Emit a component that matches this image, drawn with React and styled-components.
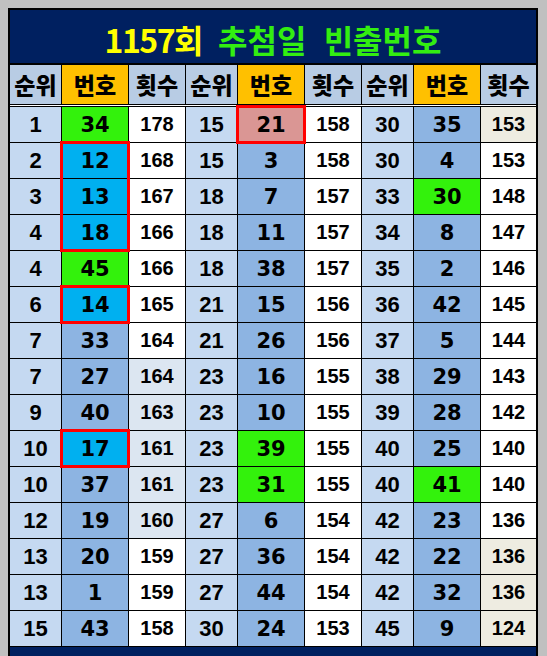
import React from 'react';
import styled, { createGlobalStyle, css } from 'styled-components';

const GlobalStyle = createGlobalStyle`
    body {
        margin: 0;
        padding: 8px;
        background: #c0c0c0;
        font-family: "Liberation Sans", "Noto Sans CJK KR", sans-serif;
    }
`;

const Sheet = styled.div`
    width: 530px;
    box-sizing: border-box;
    border: 2px solid #000;
    border-bottom: none;
    background: #000;
`;

const Title = styled.h1`
    margin: 0 0 2px;
    height: 53px;
    box-sizing: border-box;
    padding-top: 4px;
    background: #002060;
    display: flex;
    align-items: center;
    justify-content: center;
    gap: 16px;
    font: 700 32px "Noto Sans CJK KR", sans-serif;
    line-height: 1;
`;

const Round = styled.span`
    color: #ffff00;
    letter-spacing: -1.5px;
`;

const Subject = styled.span`
    color: #33ee11;
    word-spacing: 10px;
`;

const Grid = styled.div`
    display: grid;
    grid-template-columns: 51px 66px 56px 51px 66px 56px 51px 66px 55px;
    gap: 1px;
`;

const HeadCell = styled.div`
    height: 39px;
    display: flex;
    align-items: center;
    justify-content: center;
    background: ${p => (p.$num ? '#ffc000' : '#b8cce4')};
    font: 900 23px "Noto Sans CJK KR", sans-serif;
    line-height: 1;
    color: #000;
`;

const Divider = styled.div`
    height: 1px;
    margin: 1px 0;
    background: #fff;
`;

const fonts = {
    rank: css`font: 700 22px "Liberation Sans", sans-serif;`,
    num: css`font: 700 21px "DejaVu Sans", sans-serif;`,
    count: css`font: 700 20px "Liberation Sans", sans-serif;`,
};

const Cell = styled.div`
    height: 35px;
    display: flex;
    align-items: center;
    justify-content: center;
    position: relative;
    background: ${p => p.$bg};
    color: #000;
    line-height: 1;
    ${p => fonts[p.$kind]}

    ${p => p.$box && css`
        &::after {
            content: '';
            position: absolute;
            inset: -2px;
            z-index: 1;
            border: 3px solid #ff0000;
            border-top-width: ${p.$box === 'top' || p.$box === 'all' ? '3px' : '0'};
            border-bottom-width: ${p.$box === 'bot' || p.$box === 'all' ? '3px' : '0'};
            pointer-events: none;
        }
    `}
`;

const Footer = styled.div`
    height: 20px;
    margin-top: 1px;
    background: #002060;
`;

const rows = [
    [1, 34, 178, 15, 21, 158, 30, 35, 153],
    [2, 12, 168, 15, 3, 158, 30, 4, 153],
    [3, 13, 167, 18, 7, 157, 33, 30, 148],
    [4, 18, 166, 18, 11, 157, 34, 8, 147],
    [4, 45, 166, 18, 38, 157, 35, 2, 146],
    [6, 14, 165, 21, 15, 156, 36, 42, 145],
    [7, 33, 164, 21, 26, 156, 37, 5, 144],
    [7, 27, 164, 23, 16, 155, 38, 29, 143],
    [9, 40, 163, 23, 10, 155, 39, 28, 142],
    [10, 17, 161, 23, 39, 155, 40, 25, 140],
    [10, 37, 161, 23, 31, 155, 40, 41, 140],
    [12, 19, 160, 27, 6, 154, 42, 23, 136],
    [13, 20, 159, 27, 36, 154, 42, 22, 136],
    [13, 1, 159, 27, 44, 154, 42, 32, 136],
    [15, 43, 158, 30, 24, 153, 45, 9, 124],
];

const GREEN = '#33f20c';
const CYAN = '#00b0f0';
const PINK = '#da9694';
const LIGHT = '#dce6f1';
const BEIGE = '#eeece1';

// row-col -> special fill / red outline
const marks = {
    '0-1': { bg: GREEN },
    '4-1': { bg: GREEN },
    '9-4': { bg: GREEN },
    '10-4': { bg: GREEN },
    '2-7': { bg: GREEN },
    '10-7': { bg: GREEN },
    '1-1': { bg: CYAN, box: 'top' },
    '2-1': { bg: CYAN, box: 'mid' },
    '3-1': { bg: CYAN, box: 'bot' },
    '5-1': { bg: CYAN, box: 'all' },
    '9-1': { bg: CYAN, box: 'all' },
    '0-4': { bg: PINK, box: 'all' },
    '7-2': { bg: LIGHT },
    '8-2': { bg: LIGHT },
    '9-2': { bg: LIGHT },
    '10-2': { bg: LIGHT },
    '11-2': { bg: LIGHT },
    '0-8': { bg: BEIGE },
    '12-8': { bg: BEIGE },
    '13-8': { bg: BEIGE },
    '14-8': { bg: BEIGE },
};

const kinds = ['rank', 'num', 'count'];
const baseBg = { rank: '#c5d9f1', num: '#8db4e2', count: '#ffffff' };

const App = () => {
    return (
        <>
            <GlobalStyle />
            <Sheet>
                <Title>
                    <Round>1157회</Round>
                    <Subject>추첨일 빈출번호</Subject>
                </Title>
                <Grid>
                    {[0, 1, 2].map(g => (
                        <React.Fragment key={g}>
                            <HeadCell>순위</HeadCell>
                            <HeadCell $num>번호</HeadCell>
                            <HeadCell>횟수</HeadCell>
                        </React.Fragment>
                    ))}
                </Grid>
                <Divider />
                <Grid>
                    {rows.map((row, r) =>
                        row.map((v, c) => {
                            const kind = kinds[c % 3];
                            const mark = marks[`${r}-${c}`] || {};
                            return (
                                <Cell
                                    key={`${r}-${c}`}
                                    $kind={kind}
                                    $bg={mark.bg || baseBg[kind]}
                                    $box={mark.box}
                                >
                                    {v}
                                </Cell>
                            );
                        })
                    )}
                </Grid>
                <Footer />
            </Sheet>
        </>
    );
};

export default App;
